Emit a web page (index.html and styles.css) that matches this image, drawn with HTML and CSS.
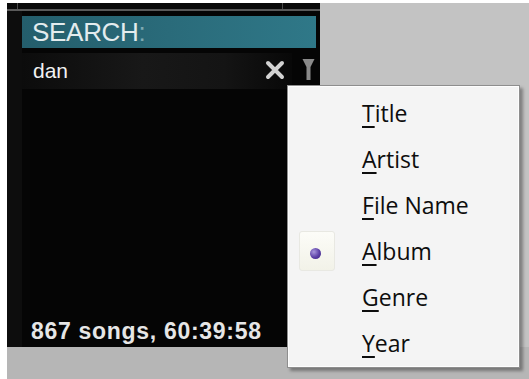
FILE: index.html
```html
<!DOCTYPE html>
<html>
<head>
<meta charset="utf-8">
<link rel="stylesheet" href="styles.css">
</head>
<body>
<div class="stage">
  <div class="gutter"></div>
  <div class="main">
    <div class="row">
      <div class="panel">
        <div class="topbar"><span class="tick t1"></span><span class="tick t2"></span></div>
        <div class="search">SEARCH<span class="colon">:</span></div>
        <div class="inputrow">
          <span class="query">dan</span>
          <svg class="clear" width="22" height="22" viewBox="0 0 22 22"><path d="M4 4 L18 18 M18 4 L4 18" stroke="#d2d2d2" stroke-width="4" stroke-linecap="round"/></svg>
          <svg class="funnel" width="13" height="24" viewBox="0 0 13 24"><path d="M0.5 1 H12.5 L8.5 9 V22 H4.5 V9 Z" fill="#8a8a8a"/></svg>
        </div>
        <div class="list"></div>
        <div class="status">867 songs, 60:39:58</div>
      </div>
      <div class="side"></div>
    </div>
    <div class="bottom"></div>
  </div>
  <div class="menu">
    <div class="item"><span class="u">T</span>itle</div>
    <div class="item"><span class="u">A</span>rtist</div>
    <div class="item"><span class="u">F</span>ile Name</div>
    <div class="item checked"><span class="check"><span class="dot"></span></span><span class="u">A</span>lbum</div>
    <div class="item"><span class="u">G</span>enre</div>
    <div class="item"><span class="u">Y</span>ear</div>
  </div>
</div>
</body>
</html>
```
FILE: styles.css
```css
html, body {
  margin: 0;
  padding: 0;
  background: #ffffff;
}
.stage {
  position: relative;
  width: 529px;
  height: 379px;
  overflow: hidden;
  display: flex;
}
.gutter {
  width: 7px;
  background: #ffffff;
}
.main {
  flex: 1;
  display: flex;
  flex-direction: column;
  padding-top: 3px;
  background: #ffffff;
}
.row {
  display: flex;
  height: 344px;
}
.panel {
  width: 313px;
  background: #050505;
  display: flex;
  flex-direction: column;
  box-shadow: inset 15px 0 0 #0d0d0d;
}
.side {
  flex: 1;
  background: #c3c3c3;
}
.bottom {
  flex: 1;
  background: #b6b6b6;
}
.topbar {
  position: relative;
  height: 6px;
  background: #0a0a0a;
  border-bottom: 2px solid #5a5a5a;
}
.tick {
  position: absolute;
  top: 0;
  width: 1px;
  height: 6px;
  background: #4a4a4a;
}
.t1 { left: 10px; }
.t2 { left: 275px; }
.search {
  margin: 5px 4px 0 15px;
  height: 32px;
  padding-left: 10px;
  background: linear-gradient(90deg, #245e6c 0%, #2a6b7a 50%, #2f7888 100%);
  color: #e3ecee;
  font-family: "Liberation Sans", Arial, sans-serif;
  font-size: 26px;
  line-height: 33px;
  letter-spacing: -0.3px;
}
.colon {
  color: #7fa9b2;
}
.inputrow {
  margin: 5px 0 0 15px;
  width: 270px;
  height: 36px;
  display: flex;
  align-items: center;
  background: linear-gradient(90deg, #0c0c0c 0%, #181818 45%, #141414 75%, #080808 100%);
}
.query {
  margin-left: 11px;
  color: #f2f2f2;
  font-family: "Liberation Sans", Arial, sans-serif;
  font-size: 21px;
  flex: 1;
}
.clear {
  margin-right: 16px;
  margin-top: -2px;
}
.funnel {
  margin-right: -23px;
  margin-top: -2px;
}
.list {
  flex: 1;
}
.status {
  padding: 0 0 3px 24px;
  color: #e6e6e6;
  font-family: "Liberation Sans", Arial, sans-serif;
  font-weight: bold;
  font-size: 23px;
  letter-spacing: 0.7px;
  line-height: 26px;
}
.menu {
  position: absolute;
  left: 287px;
  top: 85px;
  width: 233px;
  height: 283px;
  padding-top: 4px;
  box-sizing: border-box;
  background: #f4f4f4;
  border: 1px solid #8e8e8e;
  box-shadow: inset 0 0 0 1px #fdfdfd, 3px 3px 3px rgba(0, 0, 0, 0.35);
  font-family: "Open Sans", "Noto Sans", sans-serif;
  font-size: 23px;
  color: #0d0d0d;
}
.item {
  position: relative;
  height: 46px;
  line-height: 46px;
  padding-left: 74px;
}
.u {
  text-decoration: underline;
  text-decoration-thickness: 2px;
  text-underline-offset: 4px;
}
.check {
  position: absolute;
  left: 11px;
  top: 3px;
  width: 36px;
  height: 40px;
  box-sizing: border-box;
  border: 1px solid #e8e8e2;
  border-radius: 3px;
  background: linear-gradient(180deg, #fcfcf8, #f2f2e8);
}
.dot {
  position: absolute;
  left: 10px;
  top: 16px;
  width: 11px;
  height: 11px;
  border-radius: 50%;
  background: radial-gradient(circle at 35% 35%, #a896dc 0%, #5b3fa6 55%, #3b2380 100%);
}
```
